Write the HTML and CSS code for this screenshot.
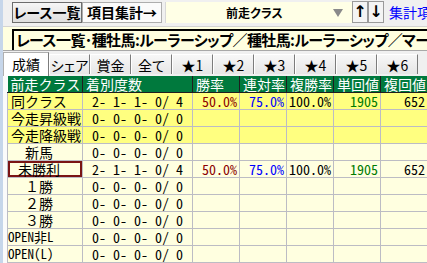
FILE: index.html
```html
<!DOCTYPE html>
<html lang="ja">
<head>
    <meta charset="UTF-8">
    <title>集計</title>
    <link rel="stylesheet" href="styles.css">
</head>
<body>
    <div class="window">
        <div class="toolbar">
            <button class="tool-button raised">レース一覧</button>
            <button class="tool-button flat">項目集計→</button>
            <div class="combo">
                <span class="combo-text">前走クラス</span>
                <span class="combo-arrow"></span>
            </div>
            <button class="arrow-button">↑</button>
            <button class="arrow-button">↓</button>
            <span class="link">集計項目</span>
        </div>

        <div class="title-bar">
            <div class="title-box">レース一覧･種牡馬:ルーラーシップ／種牡馬:ルーラーシップ／マーベラスサンデー</div>
        </div>

        <div class="tabs">
            <div class="tab active">成績</div>
            <div class="tab">シェア</div>
            <div class="tab">賞金</div>
            <div class="tab">全て</div>
            <div class="tab">★1</div>
            <div class="tab">★2</div>
            <div class="tab">★3</div>
            <div class="tab">★4</div>
            <div class="tab">★5</div>
            <div class="tab">★6</div>
        </div>

        <div class="grid-wrap">
            <table class="grid">
                <colgroup>
                    <col class="c-label"><col class="c-count"><col class="c-val"><col class="c-val"><col class="c-val"><col class="c-val"><col class="c-val">
                </colgroup>
                <thead>
                    <tr>
                        <th>前走クラス</th><th>着別度数</th><th>勝率</th><th>連対率</th><th>複勝率</th><th>単回値</th><th>複回値</th>
                    </tr>
                </thead>
                <tbody>
                    <tr class="hi">
                        <td class="label">同クラス</td><td class="count">2- 1- 1- 0/ 4</td>
                        <td class="num win">50.0%</td><td class="num rentai">75.0%</td><td class="num">100.0%</td><td class="num tan">1905</td><td class="num">652</td>
                    </tr>
                    <tr class="hi">
                        <td class="label">今走昇級戦</td><td class="count">0- 0- 0- 0/ 0</td>
                        <td></td><td></td><td></td><td></td><td></td>
                    </tr>
                    <tr class="hi">
                        <td class="label">今走降級戦</td><td class="count">0- 0- 0- 0/ 0</td>
                        <td></td><td></td><td></td><td></td><td></td>
                    </tr>
                    <tr>
                        <td class="label indent-2">新馬</td><td class="count">0- 0- 0- 0/ 0</td>
                        <td></td><td></td><td></td><td></td><td></td>
                    </tr>
                    <tr>
                        <td class="label indent-1 selected">未勝利</td><td class="count">2- 1- 1- 0/ 4</td>
                        <td class="num win">50.0%</td><td class="num rentai">75.0%</td><td class="num">100.0%</td><td class="num tan">1905</td><td class="num">652</td>
                    </tr>
                    <tr>
                        <td class="label indent-2">１勝</td><td class="count">0- 0- 0- 0/ 0</td>
                        <td></td><td></td><td></td><td></td><td></td>
                    </tr>
                    <tr>
                        <td class="label indent-2">２勝</td><td class="count">0- 0- 0- 0/ 0</td>
                        <td></td><td></td><td></td><td></td><td></td>
                    </tr>
                    <tr>
                        <td class="label indent-2">３勝</td><td class="count">0- 0- 0- 0/ 0</td>
                        <td></td><td></td><td></td><td></td><td></td>
                    </tr>
                    <tr>
                        <td class="label ascii">OPEN非L</td><td class="count">0- 0- 0- 0/ 0</td>
                        <td></td><td></td><td></td><td></td><td></td>
                    </tr>
                    <tr>
                        <td class="label ascii">OPEN(L)</td><td class="count">0- 0- 0- 0/ 0</td>
                        <td></td><td></td><td></td><td></td><td></td>
                    </tr>
                </tbody>
            </table>
        </div>
    </div>
</body>
</html>
```

FILE: styles.css
```css
body {
    margin: 0;
    padding: 0;
    background: #f0f0f0;
    font-family: "Noto Sans CJK JP", sans-serif;
    font-size: 14px;
    color: #000;
    overflow: hidden;
}
.window {
    width: 427px;
    height: 263px;
    overflow: hidden;
    border-left: 3px solid #c6d6ea;
    box-sizing: border-box;
}

/* toolbar */
.toolbar {
    display: flex;
    align-items: flex-start;
    height: 26px;
    padding: 2px 0 0 9px;
    box-sizing: border-box;
    white-space: nowrap;
    overflow: hidden;
}
.toolbar > * {
    flex-shrink: 0;
}
.tool-button {
    font-family: "Noto Sans CJK JP", sans-serif;
    font-size: 14px;
    font-weight: bold;
    line-height: 19px;
    height: 21px;
    padding: 0;
    margin: 0;
    font-feature-settings: "palt";
}
.tool-button.raised {
    width: 70px;
    border: 1px solid #6d6d6d;
    background: linear-gradient(#f6f6f6, #dedede);
}
.tool-button.flat {
    width: 80px;
    border: 1px solid #adadad;
    background: #fbfbfb;
}
.combo {
    display: flex;
    align-items: center;
    width: 187px;
    height: 21px;
    margin-left: 3px;
    background: #ffffe6;
    border-left: 1px solid #d8d8d8;
    box-sizing: border-box;
}
.combo-text {
    flex: 1;
    text-align: center;
    font-size: 12px;
    font-weight: bold;
    font-feature-settings: "palt";
    padding-left: 10px;
}
.combo-arrow {
    width: 0;
    height: 0;
    border-left: 5px solid transparent;
    border-right: 5px solid transparent;
    border-top: 8px solid #8a8a8a;
    margin-right: 9px;
}
.arrow-button {
    width: 16px;
    height: 22px;
    margin: -1px 0 0 0;
    padding: 0;
    border: 1px solid #9a9a9a;
    background: #f4f4f4;
    font-family: "DejaVu Sans", sans-serif;
    font-size: 16px;
    font-weight: bold;
    line-height: 18px;
}
.arrow-button:first-of-type {
    margin-left: 3px;
}
.link {
    margin-left: 5px;
    color: #0000ff;
    font-size: 14px;
    line-height: 20px;
}

/* title */
.title-bar {
    height: 25px;
    background: #ffffe0;
    border-top: 1px solid #d4d4d4;
    border-bottom: 1px solid #a8a8a8;
    padding: 2px 0 0 9px;
    box-sizing: border-box;
}
.title-box {
    border-top: 2px solid #000;
    border-left: 2px solid #000;
    padding-left: 2px;
    height: 19px;
    font-size: 15px;
    font-weight: bold;
    line-height: 18px;
    letter-spacing: -0.6px;
    white-space: nowrap;
    overflow: hidden;
    font-feature-settings: "palt";
}

/* tabs */
.tabs {
    display: flex;
    align-items: flex-end;
    height: 25px;
    box-sizing: border-box;
}
.tab {
    flex-shrink: 0;
    width: 41px;
    height: 20px;
    margin-bottom: 2px;
    line-height: 20px;
    text-align: center;
    font-size: 14px;
    background: linear-gradient(#f7f7f7, #e6e6e6);
    border-top: 1px solid #ffffff;
    border-left: 1px solid #ffffff;
    border-right: 1px solid #7c7c7c;
    box-sizing: border-box;
    white-space: nowrap;
    font-feature-settings: "palt";
}
.tab.active {
    width: 46px;
    height: 24px;
    margin-bottom: 0;
    background: #ffffff;
    border-top: 1px solid #b0b0b0;
    border-left: 1px solid #b0b0b0;
    line-height: 22px;
}

/* grid */
.grid-wrap {
    padding-left: 4px;
    background: #fbfbfb;
}
.grid {
    border-collapse: collapse;
    table-layout: fixed;
    width: 420px;
}
.c-label { width: 75px; }
.c-count { width: 110px; }
.c-val { width: 47px; }
.grid th {
    height: 16px;
    padding: 0 0 0 3px;
    background: #00793d;
    color: #ffffff;
    font-weight: normal;
    text-align: left;
    line-height: 16px;
    border-right: 1px solid #1e1e1e;
    border-bottom: 1px solid #1e1e1e;
    white-space: nowrap;
    overflow: hidden;
}
.grid td {
    height: 16px;
    padding: 0;
    background: #ffffe0;
    border: 1px solid #bcbcc4;
    border-top: none;
    line-height: 16px;
    white-space: pre;
    overflow: hidden;
}
.grid tr.hi td {
    background: #ffff80;
}
.grid td.label {
    padding-left: 3px;
}
.grid td.indent-1 { padding-left: 10px; }
.grid td.indent-2 { padding-left: 17px; }
.grid td.ascii {
    padding-left: 0;
    font-family: "Noto Sans Mono CJK JP", "Liberation Mono", monospace;
    font-size: 13px;
}
.grid td.selected {
    box-shadow: inset 0 0 0 2px #7a1414;
}
.grid td.count {
    text-align: center;
    font-family: "Noto Sans Mono CJK JP", "Liberation Mono", monospace;
    font-size: 14px;
}
.grid td.num {
    text-align: right;
    padding-right: 2px;
    font-family: "Noto Sans Mono CJK JP", "Liberation Mono", monospace;
    font-size: 14px;
}
.win { color: #8b0000; }
.rentai { color: #0000ff; }
.tan { color: #007a00; }
```
